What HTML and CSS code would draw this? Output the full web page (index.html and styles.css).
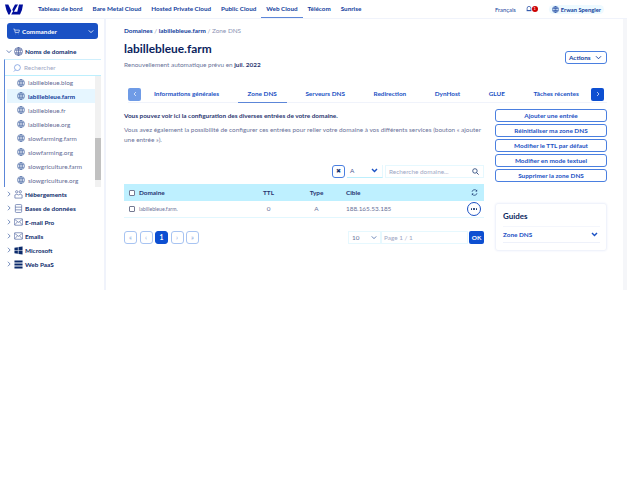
FILE: index.html
```html
<!DOCTYPE html>
<html lang="fr">
<head>
    <meta charset="UTF-8">
    <meta name="viewport" content="width=device-width, initial-scale=1.0">
    <title>Zone DNS</title>
    <link rel="stylesheet" href="styles.css">
</head>
<body>
    <svg width="0" height="0" class="defs">
        <symbol id="globe" viewBox="0 0 10 10">
            <g fill="none" stroke="currentColor" stroke-width=".8">
                <circle cx="5" cy="5" r="4.4"/>
                <ellipse cx="5" cy="5" rx="2" ry="4.4"/>
                <path d="M1 3.4h8M1 6.6h8M5 .6v8.8"/>
            </g>
        </symbol>
        <symbol id="mail" viewBox="0 0 10 8">
            <g fill="none" stroke="currentColor" stroke-width=".7">
                <rect x=".4" y=".4" width="9.2" height="7.2" rx=".8"/>
                <path d="M.6 1l4.4 3.4L9.4 1M.8 7.2l3-3.4M9.2 7.2l-3-3.4"/>
            </g>
        </symbol>
        <symbol id="chev-r" viewBox="0 0 6 8">
            <path d="M1.5 1l3 3-3 3" fill="none" stroke="currentColor" stroke-width="1"/>
        </symbol>
        <symbol id="chev-d" viewBox="0 0 8 6">
            <path d="M1 1.5l3 3 3-3" fill="none" stroke="currentColor" stroke-width="1.1"/>
        </symbol>
        <symbol id="chev-d-bold" viewBox="0 0 8 6">
            <path d="M1 1.200l3 3 3-3" fill="none" stroke="currentColor" stroke-width="1.700"/>
        </symbol>
    </svg>

    <header class="topbar">
        <svg class="logo" viewBox="0 0 18 11" width="18" height="11">
            <path d="M0 .5h3.300l3 6.300L4.700 10.500H3.300Q1 6 0 .5z" fill="#000e9c"/>
            <path d="M7.300 5.500L10 .5h3L8.500 8.500zM14 .5h4Q17.500 6 15 10.500H6.200l1.500-2.700h4.600z" fill="#000e9c"/>
        </svg>
        <nav class="topnav">
            <a>Tableau de bord</a>
            <a>Bare Metal Cloud</a>
            <a>Hosted Private Cloud</a>
            <a>Public Cloud</a>
            <a class="active">Web Cloud</a>
            <a>Télécom</a>
            <a>Sunrise</a>
        </nav>
        <div class="topright">
            <span class="lang">Français</span>
            <span class="bell">
                <svg viewBox="0 0 8 8" width="6" height="6"><path d="M1.500 6V3a2.500 2.500 0 0 1 5 0v3zM.8 6.300h6.400" fill="none" stroke="#113d9c" stroke-width=".9"/></svg>
                <i class="badge">1</i>
            </span>
            <span class="user"><svg width="7" height="7"><use href="#globe"/></svg>Erwan Spengler</span>
        </div>
    </header>

    <div class="layout">
        <aside class="sidebar">
            <button class="order">
                <svg viewBox="0 0 10 9" width="7" height="7"><path d="M.5 1h1.700l1 5h5l1-3.500H2.600M3.800 8h.5M7.300 8h.5" fill="none" stroke="#fff" stroke-width=".9"/></svg>
                <span>Commander</span>
                <svg class="caret" width="6" height="5"><use href="#chev-d"/></svg>
            </button>

            <div class="group open">
                <svg class="arrow" width="6" height="5"><use href="#chev-d"/></svg>
                <svg class="gicon" width="9" height="9"><use href="#globe"/></svg>
                <span>Noms de domaine</span>
            </div>
            <div class="domains">
                <div class="search">
                    <svg viewBox="0 0 10 10" width="8" height="8"><circle cx="5.500" cy="4.500" r="3.700" fill="none" stroke="#5c86d8" stroke-width=".8"/><path d="M3 7.500L1 9.500" stroke="#5c86d8" stroke-width=".8"/></svg>
                    <span>Rechercher</span>
                </div>
                <div class="domain-scroll">
                    <ul class="domain-list">
                        <li class="cut"><svg width="8" height="8"><use href="#globe"/></svg>labillebleue.blog</li>
                        <li class="current"><svg width="8" height="8"><use href="#globe"/></svg>labillebleue.farm</li>
                        <li><svg width="8" height="8"><use href="#globe"/></svg>labillebleue.fr</li>
                        <li><svg width="8" height="8"><use href="#globe"/></svg>labillebleue.org</li>
                        <li><svg width="8" height="8"><use href="#globe"/></svg>slowfarming.farm</li>
                        <li><svg width="8" height="8"><use href="#globe"/></svg>slowfarming.org</li>
                        <li><svg width="8" height="8"><use href="#globe"/></svg>slowgriculture.farm</li>
                        <li><svg width="8" height="8"><use href="#globe"/></svg>slowgriculture.org</li>
                    </ul>
                    <div class="scrollbar"><div class="thumb"></div></div>
                </div>
            </div>
            <div class="group">
                <svg class="arrow" width="6" height="6"><use href="#chev-r"/></svg>
                <svg class="gicon" viewBox="0 0 10 10" width="9" height="9"><g fill="none" stroke="#4a5f9c" stroke-width=".7"><circle cx="3" cy="2" r="1.300"/><circle cx="7" cy="2" r="1.300"/><path d="M1 9V5.500q2-1.500 4 0q2-1.500 4 0V9z"/></g></svg>
                <span>Hébergements</span>
            </div>
            <div class="group">
                <svg class="arrow" width="6" height="6"><use href="#chev-r"/></svg>
                <svg class="gicon" viewBox="0 0 10 10" width="9" height="9"><g fill="none" stroke="#4a5f9c" stroke-width=".7"><rect x="1.500" y=".6" width="7" height="8.800" rx="1"/><path d="M1.500 3.500h7M1.500 6.500h7"/></g></svg>
                <span>Bases de données</span>
            </div>
            <div class="group">
                <svg class="arrow" width="6" height="6"><use href="#chev-r"/></svg>
                <svg class="gicon" width="9" height="8"><use href="#mail"/></svg>
                <span>E-mail Pro</span>
            </div>
            <div class="group">
                <svg class="arrow" width="6" height="6"><use href="#chev-r"/></svg>
                <svg class="gicon" width="9" height="8"><use href="#mail"/></svg>
                <span>Emails</span>
            </div>
            <div class="group">
                <svg class="arrow" width="6" height="6"><use href="#chev-r"/></svg>
                <svg class="gicon dark" viewBox="0 0 10 10" width="9" height="9"><path d="M.5 2L4.300 1.300V4.700H.5zM5 1.200L9.500.5V4.700H5zM.5 5.400H4.300V8.700L.5 8zM5 5.400H9.500V9.500L5 8.800z" fill="#0b2a6b"/></svg>
                <span>Microsoft</span>
            </div>
            <div class="group">
                <svg class="arrow" width="6" height="6"><use href="#chev-r"/></svg>
                <svg class="gicon" viewBox="0 0 10 10" width="9" height="9"><path d="M.5 .5h9v2.200h-9zM.5 3.800h9v2.200h-9zM.5 7.100h9v2.400h-9z" fill="#0b2a6b"/></svg>
                <span>Web PaaS</span>
            </div>
        </aside>

        <main class="main">
            <div class="crumbs"><a>Domaines</a> / <a>labillebleue.farm</a> / <span>Zone DNS</span></div>
            <div class="title-row">
                <div>
                    <h1>labillebleue.farm</h1>
                    <p class="renew">Renouvellement automatique prévu en <b>juil. 2022</b></p>
                </div>
                <button class="actions">Actions <svg width="7" height="5"><use href="#chev-d"/></svg></button>
            </div>

            <div class="tabs">
                <button class="tab-arrow off"><svg width="4" height="6"><use href="#chev-r"/></svg></button>
                <a>Informations générales</a>
                <a class="active">Zone DNS</a>
                <a>Serveurs DNS</a>
                <a>Redirection</a>
                <a>DynHost</a>
                <a>GLUE</a>
                <a>Tâches récentes</a>
                <button class="tab-arrow"><svg width="4" height="6"><use href="#chev-r"/></svg></button>
            </div>

            <div class="content">
                <section class="zone">
                    <p class="lead">Vous pouvez voir ici la configuration des diverses entrées de votre domaine.</p>
                    <p class="desc">Vous avez également la possibilité de configurer ces entrées pour relier votre domaine à vos différents services (bouton « ajouter une entrée »).</p>

                    <div class="filters">
                        <button class="clear">✖</button>
                        <div class="select">A<svg width="7" height="5"><use href="#chev-d-bold"/></svg></div>
                        <div class="find">
                            <span>Recherche domaine...</span>
                            <svg viewBox="0 0 10 10" width="7" height="7"><circle cx="4.200" cy="4.200" r="3.200" fill="none" stroke="#14356f" stroke-width="1.100"/><path d="M6.600 6.600L9.400 9.400" stroke="#14356f" stroke-width="1.200"/></svg>
                        </div>
                    </div>

                    <table class="dns">
                        <thead>
                            <tr>
                                <th class="c-check"><i class="check"></i></th>
                                <th class="c-domain">Domaine</th>
                                <th class="c-ttl">TTL</th>
                                <th class="c-type">Type</th>
                                <th class="c-target">Cible</th>
                                <th class="c-more">
                                    <svg viewBox="0 0 10 10" width="7" height="7"><path d="M1.500 4a3.600 3.600 0 0 1 6.500-1.500M8.500 6a3.600 3.600 0 0 1-6.500 1.500" fill="none" stroke="#14356f" stroke-width="1"/><path d="M8.800 .8v2.600H6.200zM1.200 9.200V6.600h2.600z" fill="#14356f"/></svg>
                                </th>
                            </tr>
                        </thead>
                        <tbody>
                            <tr>
                                <td class="c-check"><i class="check"></i></td>
                                <td class="c-domain small">labillebleue.farm.</td>
                                <td class="c-ttl">0</td>
                                <td class="c-type">A</td>
                                <td class="c-target">188.165.53.185</td>
                                <td class="c-more"><button class="more"><i></i><i></i><i></i></button></td>
                            </tr>
                        </tbody>
                    </table>

                    <div class="table-foot">
                        <div class="pager">
                            <button>«</button>
                            <button>‹</button>
                            <button class="on">1</button>
                            <button>›</button>
                            <button>»</button>
                        </div>
                        <div class="page-jump">
                            <div class="per">10<svg width="6" height="5"><use href="#chev-d"/></svg></div>
                            <div class="page-input">Page 1 / 1</div>
                            <button class="ok">OK</button>
                        </div>
                    </div>
                </section>

                <aside class="side">
                    <div class="side-buttons">
                        <button>Ajouter une entrée</button>
                        <button>Réinitialiser ma zone DNS</button>
                        <button>Modifier le TTL par défaut</button>
                        <button>Modifier en mode textuel</button>
                        <button>Supprimer la zone DNS</button>
                    </div>
                    <div class="guides">
                        <h2>Guides</h2>
                        <div class="guide-row"><span>Zone DNS</span><svg width="7" height="5"><use href="#chev-d-bold"/></svg></div>
                    </div>
                </aside>
            </div>
        </main>
    </div>
</body>
</html>
```

FILE: styles.css
```css
* {
    box-sizing: border-box;
}
html, body {
    margin: 0;
    height: 100%;
}
body {
    font-family: Lato, "Noto Sans", Arial, sans-serif;
    font-size: 6.4px;
    color: #4d5693;
    background-color: #fff;
    overflow: hidden;
}
button {
    font-family: inherit;
    cursor: pointer;
    padding: 0;
}
.defs {
    position: absolute;
}

/* barre du haut */
.topbar {
    height: 19px;
    display: flex;
    align-items: center;
    padding-left: 5px;
    border-bottom: 1px solid #f0f3fb;
}
.logo {
    flex: none;
}
.topnav {
    display: flex;
    align-self: stretch;
    margin-left: 15px;
    gap: 10px;
    font-size: 6.3px;
}
.topnav a {
    display: flex;
    align-items: center;
    font-weight: 700;
    color: #113d9c;
    white-space: nowrap;
    border-bottom: 1px solid transparent;
}
.topnav a.active {
    border-bottom-color: #5c86d8;
    margin: 0 -5px;
    padding: 0 5px;
}
.topright {
    margin-left: auto;
    display: flex;
    align-items: center;
    margin-right: 23px;
    font-size: 5.8px;
}
.lang {
    color: #113d9c;
}
.bell {
    display: flex;
    align-items: center;
    margin-left: 10px;
}
.badge {
    width: 6px;
    height: 6px;
    border-radius: 50%;
    background-color: #c00;
    color: #fff;
    font-size: 4px;
    font-style: normal;
    text-align: center;
    line-height: 6px;
}
.user {
    display: flex;
    align-items: center;
    gap: 2px;
    margin-left: 11px;
    padding: 1px 3px;
    border-radius: 5px;
    background-color: #eefaff;
    color: #113d9c;
    font-weight: 700;
}

.layout {
    display: flex;
    height: 271px;
    border-right: 4px solid #f5f6f9;
}

/* menu de gauche */
.sidebar {
    width: 106px;
    flex: none;
    padding: 4px 0 0 4px;
    border-right: 2px solid #f0f3fb;
}
.order {
    width: 91px;
    height: 16px;
    margin: 0 0 0 3px;
    display: flex;
    align-items: center;
    padding: 0 4px 0 6px;
    gap: 2px;
    border: 0;
    border-radius: 3px;
    background-color: #1a51c4;
    color: #fff;
    font-size: 6.4px;
    font-weight: 700;
}
.order .caret {
    margin-left: auto;
}
.group {
    height: 14px;
    display: flex;
    align-items: center;
    font-weight: 700;
    color: #0b2a6b;
    white-space: nowrap;
    padding-left: 2px;
}
.group.open {
    height: 15px;
    margin-top: 5px;
}
.arrow {
    width: 6px;
    color: #4a6aa8;
    margin-right: 2px;
}
.gicon {
    color: #4a5f9c;
    margin-right: 2px;
}
.domains {
    border-left: 1px solid #5c86d8;
    border-top: 1px solid #cfeffc;
    margin-right: 3px;
}
.search {
    height: 16px;
    display: flex;
    align-items: center;
    gap: 3px;
    padding-left: 8px;
    color: #a0a6c4;
    border-bottom: 1px solid #bdeffd;
}
.domain-scroll {
    display: flex;
    height: 111px;
    overflow: hidden;
}
.domain-list {
    list-style: none;
    margin: 0;
    padding: 0 0 0 2px;
    flex: 1;
    min-width: 0;
}
.domain-list li {
    height: 14px;
    display: flex;
    align-items: center;
    gap: 3px;
    padding-left: 10px;
    color: #5f6a93;
    white-space: nowrap;
}
.domain-list li svg {
    color: #4a69a6;
}
.domain-list li.cut {
    height: 13px;
}
.domain-list li.current {
    background-color: #e6f6ff;
    color: #113d9c;
    font-weight: 700;
}
.scrollbar {
    width: 6px;
    background-color: #f1f1f1;
    flex: none;
    padding-top: 62px;
    padding-bottom: 7px;
}
.thumb {
    height: 100%;
    background-color: #c1c1c1;
}

/* contenu */
.main {
    flex: 1;
    min-width: 0;
    padding: 7px 16px 0 18px;
}
.crumbs {
    color: #8c93b4;
    line-height: 9px;
}
.crumbs a {
    color: #113d9c;
    font-weight: 700;
}
.title-row {
    display: flex;
    justify-content: space-between;
    align-items: flex-start;
}
h1 {
    margin: 6px 0 0 0;
    font-size: 11.9px;
    line-height: 15px;
    font-weight: 700;
    color: #0b1f5e;
}
.renew {
    margin: 4px 0 0 0;
    color: #6a7299;
    line-height: 9px;
}
.renew b {
    color: #2a3570;
    font-weight: 700;
}
.actions {
    margin-top: 16px;
    width: 42px;
    height: 13px;
    display: flex;
    align-items: center;
    justify-content: space-between;
    padding: 0 4px 0 3px;
    border: 1px solid #4a7fe0;
    border-radius: 3px;
    background-color: #fff;
    color: #113d9c;
    font-size: 6.4px;
    font-weight: 700;
}
.tabs {
    display: flex;
    align-items: center;
    height: 17px;
    margin: 17px 0 0 4px;
    padding-right: 3px;
    font-weight: 700;
    color: #1a51c4;
    border-bottom: 1px solid #f0f3fb;
}
.tabs a {
    height: 17px;
    display: flex;
    align-items: center;
    padding: 0 10px;
    margin-right: 8.5px;
    white-space: nowrap;
    border-bottom: 1px solid transparent;
}
.tabs a:last-of-type {
    margin-right: 0;
}
.tabs a.active {
    border-bottom-color: #5c86d8;
}
.tab-arrow {
    width: 13px;
    height: 13px;
    display: flex;
    align-items: center;
    justify-content: center;
    flex: none;
    border: 0;
    border-radius: 2px;
    background-color: #0d4fd1;
    color: #fff;
}
.tab-arrow.off {
    background-color: #6f9be6;
    margin-right: 3px;
}
.tab-arrow.off svg {
    transform: scaleX(-1);
}
.tab-arrow:last-child {
    margin-left: auto;
}

.content {
    display: flex;
    justify-content: space-between;
    margin-top: 6px;
}
.zone {
    width: 360px;
}
.lead {
    margin: 2px 0 0 0;
    font-weight: 700;
    color: #2a3570;
    line-height: 10px;
}
.desc {
    margin: 4px 0 0 0;
    line-height: 10px;
    color: #6a7299;
}
.filters {
    display: flex;
    justify-content: flex-end;
    align-items: center;
    margin-top: 19px;
    height: 14px;
}
.clear {
    width: 13px;
    height: 13px;
    border: 1px solid #4a7fe0;
    border-radius: 3px;
    background-color: #fff;
    color: #14356f;
    font-size: 6px;
    line-height: 1;
}
.select {
    width: 36px;
    height: 13px;
    margin-left: 2px;
    display: flex;
    align-items: center;
    justify-content: space-between;
    padding: 0 4px 0 3px;
    border-bottom: 1px solid #bdeffd;
    border-right: 1px solid #e6f8fe;
    background-color: #fff;
    color: #4d5693;
}
.select svg {
    color: #1a51c4;
}
.find {
    width: 99px;
    height: 13px;
    margin-left: 2px;
    display: flex;
    align-items: center;
    justify-content: space-between;
    padding: 0 4px 0 3px;
    border: 1px solid #e6f8fe;
    color: #a0a6c4;
}
.dns {
    width: 100%;
    margin-top: 6px;
    border-collapse: collapse;
    table-layout: fixed;
}
.dns th {
    height: 17px;
    background-color: #bef0ff;
    color: #27346f;
    font-weight: 700;
    text-align: left;
    padding: 0;
}
.dns td {
    height: 16px;
    padding: 0;
    color: #6a7299;
    border-bottom: 1px solid #e2f7fe;
}
.dns .c-check {
    width: 15px;
    text-align: center;
}
.dns .c-domain {
    width: 107px;
}
.dns .c-ttl {
    width: 45px;
    text-align: center;
}
.dns .c-type {
    width: 51px;
    text-align: center;
}
.dns .c-target {
    width: 122px;
    padding-left: 4px;
}
.dns .c-more {
    text-align: center;
}
.dns .small {
    font-size: 5.2px;
}
.check {
    display: inline-block;
    width: 6px;
    height: 6px;
    border: 1px solid #757a92;
    border-radius: 1px;
    background-color: #fff;
    vertical-align: middle;
}
.more {
    width: 14px;
    height: 14px;
    display: inline-flex;
    align-items: center;
    justify-content: center;
    gap: 1px;
    border: 1px solid #1a51c4;
    border-radius: 50%;
    background-color: #fff;
    vertical-align: middle;
}
.more i {
    width: 1.5px;
    height: 1.5px;
    border-radius: 50%;
    background-color: #14356f;
}
.table-foot {
    display: flex;
    justify-content: space-between;
    margin-top: 13px;
}
.pager {
    display: flex;
    gap: 2.5px;
}
.pager button {
    width: 13px;
    height: 13px;
    border: 1px solid #a8c4f2;
    border-radius: 3px;
    background-color: #fff;
    color: #7f9fe0;
    font-size: 6.8px;
    line-height: 1;
}
.pager button.on {
    background-color: #0d4fd1;
    border-color: #0d4fd1;
    color: #fff;
    font-weight: 700;
}
.page-jump {
    display: flex;
    height: 13px;
    align-items: stretch;
}
.per {
    width: 33px;
    display: flex;
    align-items: center;
    justify-content: space-between;
    padding: 0 3px;
    border: 1px solid #e6f8fe;
    color: #6a7299;
}
.per svg {
    color: #4a6aa8;
}
.page-input {
    width: 87px;
    display: flex;
    align-items: center;
    padding-left: 2px;
    border: 1px solid #e6f8fe;
    color: #a0a6c4;
}
.ok {
    width: 15px;
    margin-left: 1px;
    border: 0;
    border-radius: 2px;
    background-color: #0d4fd1;
    color: #fff;
    font-size: 6.4px;
    font-weight: 700;
}
.side {
    width: 112px;
    flex: none;
}
.side-buttons {
    display: flex;
    flex-direction: column;
    gap: 2px;
}
.side-buttons button {
    height: 13px;
    border: 1px solid #4a7fe0;
    border-radius: 3px;
    background-color: #fff;
    color: #1a51c4;
    font-size: 6.4px;
    font-weight: 700;
}
.guides {
    margin-top: 21px;
    height: 48px;
    padding: 7px 6px 0 7px;
    border: 1px solid #f0f3fb;
    border-radius: 3px;
    box-shadow: 0 0 2px #e9edf9;
}
h2 {
    margin: 0;
    font-size: 8px;
    line-height: 11px;
    font-weight: 700;
    color: #0b1f5e;
}
.guide-row {
    display: flex;
    align-items: center;
    justify-content: space-between;
    height: 17px;
    margin-top: 4px;
    padding-right: 2px;
    border-top: 1px solid #f4f6fc;
    border-bottom: 1px solid #eef1fa;
    color: #1a51c4;
    font-weight: 700;
}
```
